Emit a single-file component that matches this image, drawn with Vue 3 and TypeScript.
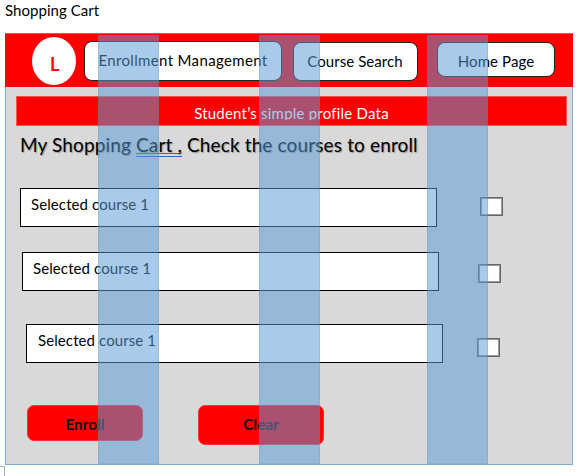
<script setup lang="ts">
interface Course { id: number; label: string; top: number; indent: number; textPad: number; gap: number; boxTop: number }

const courses: Course[] = [
  { id: 1, label: 'Selected course 1', top: 0, indent: 15, textPad: 10, gap: 43, boxTop: 9 },
  { id: 2, label: 'Selected course 1', top: 25, indent: 17, textPad: 10, gap: 39, boxTop: 12 },
  { id: 3, label: 'Selected course 1', top: 33, indent: 21, textPad: 11, gap: 34, boxTop: 14 },
]
</script>

<template>
  <main class="page">
    <h1 class="title"><span>Shopping Cart</span></h1>
    <section class="panel">
      <header class="header">
        <div class="logo"><span>L</span></div>
        <nav class="nav">
          <button class="tab enrollment"><span>Enrollment Management</span></button>
          <button class="tab search"><span>Course Search</span></button>
          <button class="tab home"><span>Home Page</span></button>
        </nav>
      </header>
      <div class="profile"><p><span>Student’s simple profile Data</span></p></div>
      <h2 class="heading"><span>My Shopping <span class="flagged">Cart ,</span> Check the courses to enroll</span></h2>
      <div class="courses">
        <div v-for="c in courses" :key="c.id" class="course" :style="{ marginTop: c.top + 'px', paddingLeft: c.indent + 'px' }">
          <div class="field" :style="{ paddingLeft: c.textPad + 'px' }"><span>{{ c.label }}</span></div>
          <div class="check" :style="{ marginLeft: c.gap + 'px', marginTop: c.boxTop + 'px' }"></div>
        </div>
      </div>
      <footer class="actions">
        <button class="action enroll"><span>Enroll</span></button>
        <button class="action clear"><span>Clear</span></button>
      </footer>
      <div class="columns"><i></i><i></i><i></i></div>
    </section>
    <div class="corner"></div>
  </main>
</template>

<style>
body { background: #fff; overflow: hidden; }
</style>

<style scoped>
* { box-sizing: border-box; }
.page { width: 584px; height: 476px; font-family: Lato, "Liberation Sans", sans-serif; font-size: 15px; color: #000; background: #fff; overflow: hidden; }
.title { margin: 0; height: 33px; padding: 0 0 0 5px; font-size: 15px; font-weight: 400; line-height: 20px; letter-spacing: .05px; }
.panel { position: relative; width: 568px; height: 432px; margin-left: 5px; background: #d9d9d9; box-shadow: inset 0 0 0 1px #84acd0; }
.header { display: flex; height: 54px; width: 568px; padding-left: 27px; background: #f00; border-top: 1px solid #f05050; }
.logo { width: 44px; height: 48px; margin-top: 3px; border-radius: 50%; background: #fff; color: #f00; font-size: 18px; font-weight: 700; line-height: 24px; padding: 15px 0 0 18px; }
.nav { display: flex; padding: 7px 0 0 8px; }
button { font-family: inherit; }
.tab { display: flex; justify-content: center; height: 40px; padding: 0; border: 1px solid #222; border-radius: 8px; background: #fff; font-size: 15px; line-height: 20px; color: #000; white-space: nowrap; }
.enrollment { width: 198px; padding-top: 8px; letter-spacing: .35px; }
.search { width: 125px; height: 39px; margin: 1px 0 0 11px; padding: 8px 1px 0 0; letter-spacing: .08px; }
.home { width: 118px; height: 35px; margin: 1px 0 0 19px; padding-top: 8px; letter-spacing: .08px; }
.profile { width: 551px; height: 30px; margin: 9px 0 0 11px; background: #f00; border: 1px solid #ee5555; }
.profile p { height: 23px; margin: 0; padding-top: 6px; overflow: hidden; text-align: center; color: #fff; line-height: 20px; letter-spacing: .22px; }
.heading { margin: 0; height: 62px; padding: 5px 0 0 15px; font-size: 19px; font-weight: 400; line-height: 28px; white-space: nowrap; letter-spacing: .14px; text-shadow: 1px 1px 1px #999; }
.flagged { display: inline-block; height: 26px; border-bottom: 4px double #2e65d4; }
.course { display: flex; height: 39px; }
.field { width: 417px; height: 39px; border: 1px solid #000; background: #fff; padding-top: 5px; line-height: 20px; letter-spacing: .1px; }
.check { width: 23px; height: 19px; border: 1.5px solid #666; outline: .5px solid #999; outline-offset: -2px; background: #fff; }
.actions { display: flex; padding: 42px 0 0 22px; }
.action { height: 36px; width: 116px; padding: 8px 0 0; display: flex; justify-content: center; border: 1px solid #f33; border-radius: 7px; background: #f00; color: #111; font-size: 15.3px; line-height: 20px; font-weight: 700; }
.clear { width: 126px; height: 40px; margin-left: 55px; }
.columns { position: absolute; left: 93px; top: 2px; height: 429px; display: flex; gap: 100px; pointer-events: none; }
.columns i { width: 61px; height: 429px; background: rgba(91, 155, 213, .52); border: 1px solid rgba(65, 113, 156, .15); }
.columns i:last-child { margin-left: 7px; }
.corner { width: 5px; height: 10px; margin-top: 1px; border-top: 1px solid #aaa; border-right: 1px solid #aaa; }
</style>
